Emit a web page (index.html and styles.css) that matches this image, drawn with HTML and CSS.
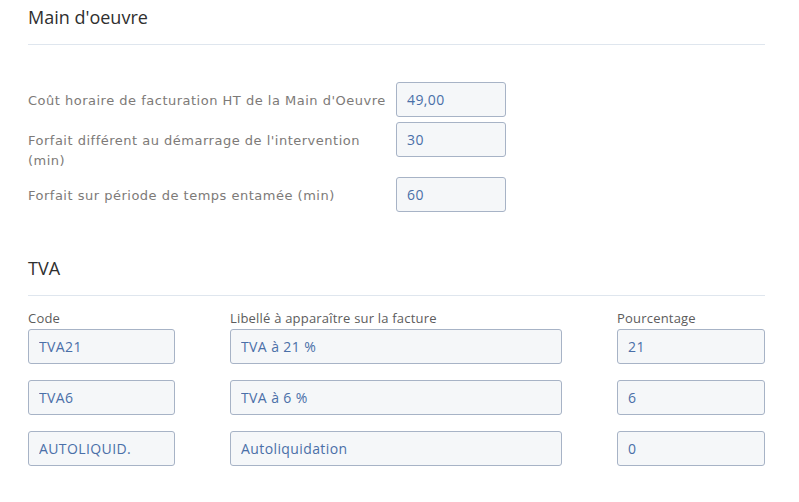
FILE: index.html
```html
<!DOCTYPE html>
<html lang="fr">
<head>
<meta charset="utf-8">
<title>Main d'oeuvre</title>
<link rel="stylesheet" href="styles.css">
</head>
<body>
<div class="page">
  <section class="section">
    <h2 class="section-title">Main d'oeuvre</h2>
    <div class="form">
      <div class="form-row">
        <label class="form-label">Coût horaire de facturation HT de la Main d'Oeuvre</label>
        <input class="field" type="text" value="49,00">
      </div>
      <div class="form-row">
        <label class="form-label">Forfait différent au démarrage de l'intervention (min)</label>
        <input class="field" type="text" value="30">
      </div>
      <div class="form-row">
        <label class="form-label">Forfait sur période de temps entamée (min)</label>
        <input class="field" type="text" value="60">
      </div>
    </div>
  </section>

  <section class="section section-tva">
    <h2 class="section-title">TVA</h2>
    <div class="tva-grid">
      <div class="col-label">Code</div>
      <div class="col-label">Libellé à apparaître sur la facture</div>
      <div class="col-label">Pourcentage</div>

      <input class="field" type="text" value="TVA21">
      <input class="field" type="text" value="TVA à 21 %">
      <input class="field" type="text" value="21">

      <input class="field" type="text" value="TVA6">
      <input class="field" type="text" value="TVA à 6 %">
      <input class="field" type="text" value="6">

      <input class="field" type="text" value="AUTOLIQUID.">
      <input class="field" type="text" value="Autoliquidation">
      <input class="field" type="text" value="0">
    </div>
  </section>
</div>
</body>
</html>
```

FILE: styles.css
```css
html, body {
  margin: 0;
  padding: 0;
  background: #ffffff;
}

body {
  font-family: "Open Sans", "Liberation Sans", sans-serif;
  color: #333333;
}

.page {
  padding: 0 34px 0 28px;
}

.section-title {
  margin: 0;
  padding: 5px 0 15px;
  font-size: 18px;
  line-height: 24px;
  font-weight: 400;
  color: #2f2f2f;
  border-bottom: 1px solid #dfe6ee;
}

.form {
  margin-top: 37px;
}

.form-row {
  display: grid;
  grid-template-columns: 368px 110px;
  align-items: start;
  margin-bottom: 5px;
}

.form-label {
  padding: 9px 0 1px;
  font-family: "DejaVu Sans", "Open Sans", sans-serif;
  font-size: 13px;
  line-height: 20px;
  color: #7d7a78;
  letter-spacing: 0.5px;
}

.field {
  box-sizing: border-box;
  width: 100%;
  height: 35px;
  margin: 0;
  padding: 0 10px;
  border: 1px solid #a7b3c6;
  border-radius: 3px;
  background: #f5f7f9;
  font-family: "Open Sans", "Liberation Sans", sans-serif;
  font-size: 14px;
  letter-spacing: 0.4px;
  color: #4a6fa8;
  outline: none;
}

.section-tva {
  margin-top: 39px;
}

.tva-grid {
  display: grid;
  grid-template-columns: 147px 332px 148px;
  column-gap: 55px;
  row-gap: 16px;
  margin-top: 13px;
}

.col-label {
  font-size: 13px;
  line-height: 18px;
  letter-spacing: 0.2px;
  color: #5c5c5c;
  margin-bottom: -14px;
}
```
